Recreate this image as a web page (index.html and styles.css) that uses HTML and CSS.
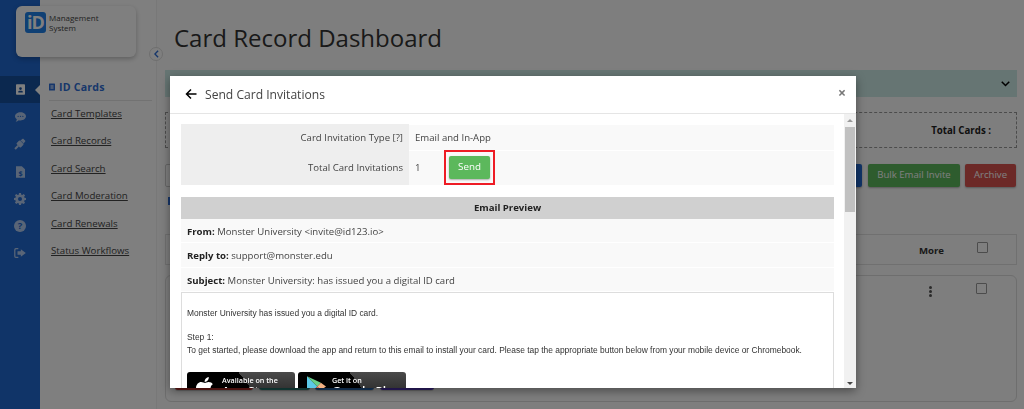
FILE: index.html
```html
<!DOCTYPE html>
<html lang="en">
<head>
<meta charset="utf-8">
<title>Card Record Dashboard</title>
<link rel="stylesheet" href="styles.css">
</head>
<body>
<div class="app">
  <aside class="rail">
    <div class="brand-card">
      <div class="logo">iD</div>
      <div class="brand-text">Management<br>System</div>
    </div>
    <nav class="rail-nav">
      <div class="rail-item active">
        <svg viewBox="0 0 12 14" width="9" height="11"><path fill="#fff" fill-rule="evenodd" d="M1 0h10a1 1 0 0 1 1 1v12a1 1 0 0 1-1 1H1a1 1 0 0 1-1-1V1a1 1 0 0 1 1-1zM6 4a1.800 1.800 0 1 0 0 3.600A1.800 1.800 0 0 0 6 4zM3 11h6V9.800c0-.8-1-1.300-3-1.300s-3 .5-3 1.300z"/></svg>
      </div>
      <div class="rail-item">
        <svg viewBox="0 0 14 12" width="11" height="10"><path fill="#fff" fill-rule="evenodd" d="M7 0c3.900 0 7 2.300 7 5.200s-3.100 5.200-7 5.200c-.8 0-1.500-.1-2.200-.3C3.800 11 2.400 12 .8 12c1-.9 1.500-1.900 1.500-3C.9 8 0 6.700 0 5.200 0 2.300 3.100 0 7 0zM4 4.300a.9.900 0 1 0 0 1.800.9.900 0 0 0 0-1.800zm3 0a.9.900 0 1 0 0 1.800.9.900 0 0 0 0-1.800zm3 0a.9.900 0 1 0 0 1.800.9.900 0 0 0 0-1.800z"/></svg>
      </div>
      <div class="rail-item">
        <svg viewBox="0 0 14 14" width="14" height="14"><g fill="#fff" transform="rotate(45 7 7)"><rect x="4" y="4.500" width="6" height="5" rx="1"/><rect x="5" y="1.500" width="1.200" height="3"/><rect x="7.800" y="1.500" width="1.200" height="3"/><rect x="6" y="9.500" width="2" height="4.500"/></g><path fill="#fff" d="M8.500 4 10 1.500l2.500 2.500L10 5.500z"/></svg>
      </div>
      <div class="rail-item">
        <svg viewBox="0 0 10 13" width="9" height="12"><path fill="#fff" d="M0 0h6.500L10 3.500V13H0z"/><text class="doc-mark" x="5" y="11" text-anchor="middle">$</text></svg>
      </div>
      <div class="rail-item">
        <svg viewBox="0 0 24 24" width="12" height="12"><path fill="#fff" fill-rule="evenodd" d="M10 0h4l.6 3.300 2 .8L19.400 2l2.800 2.800-2 2.800.8 2 3 .4v4l-3 .6-.8 2 1.900 2.800-2.800 2.800-2.800-1.900-2 .8L14 24h-4l-.6-3.300-2-.8L4.600 22l-2.800-2.800 1.900-2.800-.8-2L0 14v-4l3-.6.800-2-2-2.800L4.600 2l2.800 2.100 2-.8zM12 8a4 4 0 1 0 0 8 4 4 0 0 0 0-8z"/></svg>
      </div>
      <div class="rail-item">
        <span class="help-glyph">?</span>
      </div>
      <div class="rail-item">
        <svg viewBox="0 0 14 12" width="12" height="10"><path fill="#fff" d="M0 2a2 2 0 0 1 2-2h3v1.500H2.500a1 1 0 0 0-1 1v7a1 1 0 0 0 1 1H5V12H2a2 2 0 0 1-2-2zM8 1.500 14 6l-6 4.500V8H4V4h4z"/></svg>
      </div>
    </nav>
  </aside>

  <nav class="subnav">
    <div class="subnav-head">
      <svg viewBox="0 0 12 14" width="6" height="8"><path fill="#2f6fd6" fill-rule="evenodd" d="M1 0h10a1 1 0 0 1 1 1v12a1 1 0 0 1-1 1H1a1 1 0 0 1-1-1V1a1 1 0 0 1 1-1zM3 4v2h6V4zm0 4v2h6V8z"/></svg>
      <span>ID Cards</span>
    </div>
    <a class="subnav-link">Card Templates</a>
    <a class="subnav-link">Card Records</a>
    <a class="subnav-link">Card Search</a>
    <a class="subnav-link">Card Moderation</a>
    <a class="subnav-link">Card Renewals</a>
    <a class="subnav-link">Status Workflows</a>
  </nav>

  <main class="main">
    <h1 class="title">Card Record Dashboard</h1>
    <div class="teal-bar">
      <svg viewBox="0 0 12 8" width="9" height="6"><path fill="none" stroke="#000" stroke-width="2" d="M1 1l5 5 5-5"/></svg>
    </div>
    <div class="totals"><span>Total Cards :</span></div>
    <div class="actions">
      <span class="btn btn-outline"></span>
      <span class="btn btn-blue"></span>
      <span class="btn btn-green">Bulk Email Invite</span>
      <span class="btn btn-red">Archive</span>
    </div>
    <div class="thead">
      <span class="more">More</span>
      <span class="check check-head"></span>
    </div>
    <div class="record">
      <div class="record-top">
        <span class="kebab"><i></i><i></i><i></i></span>
        <span class="check"></span>
      </div>
      <div class="record-btns">
        <span class="mini mini-red"></span>
        <span class="mini mini-teal"></span>
        <span class="mini mini-blue"></span>
        <span class="mini mini-purple"></span>
      </div>
    </div>
  </main>
</div>

<div class="toggle">
  <svg viewBox="0 0 6 10" width="5" height="8"><path fill="none" stroke="#2f6fd6" stroke-width="1.800" d="M5 1 1 5l4 4"/></svg>
</div>
<span class="stray-link"></span>

<div class="backdrop"></div>

<section class="modal">
  <header class="modal-head">
    <svg class="back" viewBox="0 0 12 12" width="12" height="12"><path fill="none" stroke="#000" stroke-width="1.500" d="M11.500 6H1.500M6 1.500 1.500 6 6 10.500"/></svg>
    <h2 class="modal-title">Send Card Invitations</h2>
    <span class="close">×</span>
  </header>
  <div class="modal-body">
    <div class="modal-content">
      <div class="form-row row-a">
        <div class="form-label">Card Invitation Type [?]</div>
        <div class="form-value">Email and In-App</div>
      </div>
      <div class="form-row row-b">
        <div class="form-label">Total Card Invitations</div>
        <div class="form-value">
          <span class="count">1</span>
          <span class="send-ring"><span class="send">Send</span></span>
        </div>
      </div>
      <div class="preview-head">Email Preview</div>
      <div class="meta"><b>From:</b> Monster University &lt;invite@id123.io&gt;</div>
      <div class="meta"><b>Reply to:</b> support@monster.edu</div>
      <div class="meta"><b>Subject:</b> Monster University: has issued you a digital ID card</div>
      <div class="email">
        <p class="email-p">Monster University has issued you a digital ID card.</p>
        <p class="email-step">Step 1:</p>
        <p class="email-p">To get started, please download the app and return to this email to install your card. Please tap the appropriate button below from your mobile device or Chromebook.</p>
        <div class="stores">
          <div class="store store-apple">
            <svg viewBox="0 0 24 28" width="18" height="21"><path fill="#fff" d="M17 0c.2 2-.6 3.500-1.500 4.700-1 1.200-2.400 2-3.900 1.900-.2-1.800.7-3.500 1.600-4.500C14.200 1 15.700.200 17 0zM12 8c1 0 2.800-1.300 5-1.200 2.300 0 4.300 1.200 5.400 3-4.500 2.700-3.700 8.700.9 10.500-1.200 3-3.400 7.500-6 7.700-1.800 0-2.500-1.200-4.500-1.200s-2.800 1.200-4.500 1.200C5 28 0 20.500 0 15.200 0 10 3.500 6.900 6.800 6.800 9 6.800 11 8 12 8z"/></svg>
            <span class="store-text"><span class="store-small">Available on the</span><span class="store-big">App Store</span></span>
          </div>
          <div class="store store-play">
            <svg viewBox="0 0 26 28" width="19" height="21"><path fill="#5cc9e8" d="M0 0v28l14-14z"/><path fill="#6bd08a" d="M0 0l14 14 5-5z"/><path fill="#f4b183" d="M14 14l5 5 7-5-7-5z"/><path fill="#e86a5a" d="M0 28l14-14 5 5z"/></svg>
            <span class="store-text"><span class="store-small">Get it on</span><span class="store-big">Google Play</span></span>
          </div>
        </div>
      </div>
    </div>
    <div class="scrollbar">
      <span class="arrow-up"></span>
      <span class="thumb"></span>
      <span class="arrow-down"></span>
    </div>
  </div>
</section>
```

FILE: styles.css
```css
* { box-sizing: border-box; }
html, body { margin: 0; height: 100%; overflow: hidden; }
body {
  font-family: "Open Sans", "Liberation Sans", sans-serif;
  font-size: 12px;
  color: #333;
  background: #fcfcfc;
}
.app { display: flex; height: 409px; }

.rail { width: 40px; flex: none; background: #2068d0; position: relative; }
.brand-card {
  position: absolute; left: 16px; top: 6px; width: 120px; height: 51px;
  background: #fff; border-radius: 6px;
  box-shadow: 0 2px 5px rgba(0,0,0,.25);
  display: flex; align-items: flex-start; gap: 3px; padding: 6px 0 0 9px;
  z-index: 2;
}
.logo {
  width: 21px; height: 21px; border-radius: 3px; background: #1f80e8; color: #fff;
  font: 700 18px/21px "Open Sans", sans-serif; text-align: center; letter-spacing: -1px;
}
.brand-text { font-size: 8px; line-height: 10px; color: #444; margin-top: 1px; }
.rail-nav { padding-top: 76px; display: flex; flex-direction: column; }
.rail-item { height: 27.300px; display: flex; align-items: center; justify-content: center; position: relative; opacity: .66; }
.rail-item.active { background: #17509f; opacity: 1; }
.rail-item.active::after {
  content: ""; position: absolute; right: 0; top: 9px;
  border: 5px solid transparent; border-right-color: #fff; border-left: 0;
}
.doc-mark { font-size: 8px; font-weight: 700; fill: #2068d0; font-family: "Open Sans", sans-serif; }
.help-glyph {
  width: 12px; height: 12px; border-radius: 50%; background: #fff; color: #2068d0;
  font: 700 9.500px/12px "Open Sans", sans-serif; text-align: center;
}

.subnav { width: 117px; flex: none; padding: 79px 4px 0 9px; border-right: 1px solid #f0f0f0; background: #fff; }
.subnav-head {
  display: flex; align-items: center; gap: 4px; height: 22px; color: #2f6fd6;
  font-weight: 700; font-size: 10.600px; border-bottom: 1px solid #e4e4e4;
  letter-spacing: .2px; margin-bottom: 5px; padding-bottom: 6px;
}
.subnav-link {
  display: block; height: 27.400px; font-size: 9.700px; line-height: 15px; color: #444;
  text-decoration: underline; padding-left: 2px; white-space: nowrap;
}

.main { flex: 1; min-width: 0; padding: 0 7px 0 8px; background: #fcfcfc; }
.title { margin: 0; padding: 22px 0 0 9px; height: 70px; font-weight: 400; font-size: 24px; line-height: 32px; color: #333; }
.teal-bar {
  height: 27px; background: #cdeae6; display: flex; align-items: center; justify-content: flex-end;
  padding-right: 7px; margin-bottom: 15px;
}
.totals {
  height: 36px; border: 1px dashed #999; display: flex; align-items: center; justify-content: flex-end;
  padding-right: 25px; font-weight: 700; font-size: 9.700px; color: #222; margin-bottom: 16px;
}
.actions { display: flex; justify-content: flex-end; gap: 5px; height: 23px; padding-right: 1px; margin-bottom: 47px; }
.btn { height: 23px; padding: 0 10px; line-height: 22px; font-size: 9.600px; color: #fff; border-radius: 2px; box-shadow: 0 1px 2px rgba(0,0,0,.3); white-space: nowrap; }
.btn-outline { width: 40px; margin-right: auto; border: 1px solid #ccc; box-shadow: none; background: #fff; }
.btn-blue { width: 40px; background: #2068d0; margin-right: 1px; }
.btn-green { background: #5cb85c; width: 92px; text-align: center; padding: 0; }
.btn-red { background: #d9534f; width: 51px; text-align: center; padding: 0; }
.thead {
  height: 31px; border: 1px solid #e0e0e0; background: #fcfcfc; display: flex; align-items: center;
  justify-content: flex-end; padding-right: 28px; font-weight: 700; font-size: 9.600px; color: #333; margin-bottom: 10px;
}
.more { margin-right: 33px; margin-top: 2px; }
.check { width: 11px; height: 11px; border: 1px solid #999; background: #fff; border-radius: 1px; display: block; }
.check-head { margin-bottom: 4px; }
.record { height: 127px; border: 1px solid #ddd; border-radius: 6px; position: relative; }
.record-top { display: flex; justify-content: flex-end; align-items: flex-start; padding: 7px 29px 0 0; }
.kebab { display: flex; flex-direction: column; gap: 1px; margin-right: 44px; margin-top: 3px; }
.kebab i { width: 3px; height: 3px; background: #555; border-radius: 50%; display: block; }
.record-btns { display: flex; gap: 5.500px; padding: 77px 0 0 9px; }
.mini { height: 16px; border-radius: 3px; display: block; box-shadow: 0 1px 1px rgba(0,0,0,.2); }
.mini-red { width: 78px; background: #c9302c; }
.mini-teal { width: 51px; background: #2a8a80; }
.mini-blue { width: 59px; background: #2a70c0; }
.mini-purple { width: 54px; background: #5a3ac9; }

.toggle {
  position: absolute; left: 149px; top: 47px; width: 14px; height: 14px; border-radius: 50%;
  background: #fff; border: 1px solid #ddd; display: flex; align-items: center; justify-content: center;
  z-index: 2;
}
.stray-link { position: absolute; left: 168px; top: 197px; width: 2px; height: 8px; background: #2f6fd6; }

.backdrop { position: fixed; inset: 0; background: rgba(0,0,0,.5); z-index: 5; }

.modal {
  position: absolute; left: 170px; top: 76px; width: 686px; height: 312px; background: #fff;
  z-index: 6; box-shadow: 0 3px 9px rgba(0,0,0,.4); display: flex; flex-direction: column;
}
.modal-head {
  height: 38px; flex: none; display: flex; align-items: center; padding: 0 10px 1px 15px;
  border-bottom: 1px solid #e5e5e5;
}
.back { margin-right: 8px; }
.modal-title { margin: 0; font-weight: 400; font-size: 12.100px; color: #444; flex: 1; }
.close { font-size: 14px; line-height: 14px; font-weight: 700; color: #777; margin-top: -3px; }
.modal-body { flex: 1; display: flex; min-height: 0; }
.modal-content { flex: 1; min-width: 0; overflow: hidden; padding: 10px 10px 0 11px; }
.form-row { display: flex; }
.row-a { height: 26px; }
.row-b { height: 35px; margin-bottom: 12px; }
.form-label {
  width: 228px; background: #eee; padding-right: 6px; font-size: 9.600px; color: #444;
  display: flex; align-items: center; justify-content: flex-end;
}
.form-value {
  flex: 1; background: #f9f9f9; padding-left: 6px; font-size: 9.600px; color: #444;
  display: flex; align-items: center; box-shadow: inset 0 1px #fff;
}
.count { width: 29px; }
.send-ring { border: 2px solid #ee1c25; padding: 4px 3px; display: block; }
.send {
  display: block; width: 41px; height: 23px; background: #5cb85c; color: #fff; text-align: center;
  font-size: 9.800px; line-height: 21px; border-radius: 2px; box-shadow: 0 1px 2px rgba(0,0,0,.3);
}
.preview-head { height: 22px; background: #d0d0d0; text-align: center; font-weight: 700; font-size: 9.600px; line-height: 22px; color: #222; }
.meta { height: 24.300px; background: #f9f9f9; border-bottom: 1px solid #fff; padding-left: 6px; font-size: 9.600px; line-height: 25px; color: #444; white-space: nowrap; }
.meta b { color: #222; }
.email { border: 1px solid #ddd; padding: 14px 0 0 5px; height: 200px; font-family: "Liberation Sans", sans-serif; font-size: 8.420px; line-height: 13px; color: #333; }
.email-p { margin: 0; white-space: nowrap; }
.email-step { margin: 11px 0 0; }
.stores { display: flex; gap: 3px; margin-top: 15px; }
.store {
  width: 108px; height: 40px; border-radius: 3px;
  background: linear-gradient(53deg, #000 59%, transparent 59%), linear-gradient(#4a4a4a, #111);
  color: #fff; display: flex; align-items: flex-start; padding: 3px 0 0 9px;
  font-family: "Open Sans", sans-serif; overflow: hidden;
}
.store svg { margin-top: 2px; flex: none; }
.store-apple { gap: 8px; }
.store-play { gap: 6px; padding-top: 4px; padding-left: 9px; }
.store-play svg { margin-top: 0; }
.store-text { display: flex; flex-direction: column; white-space: nowrap; }
.store-small { font-size: 7.200px; line-height: 10px; font-weight: 600; }
.store-big { font-size: 12px; line-height: 14px; font-weight: 600; }
.store-play .store-text { margin-top: -1px; }

.scrollbar { width: 12px; flex: none; background: #f1f1f1; display: flex; flex-direction: column; align-items: center; padding: 5px 0 3px; }
.arrow-up { border: 3px solid transparent; border-bottom: 3px solid #999; border-top: 0; }
.thumb { width: 10px; height: 85px; background: #c1c1c1; margin-top: 5px; margin-bottom: auto; }
.arrow-down { border: 3px solid transparent; border-top: 3px solid #444; border-bottom: 0; }
```
